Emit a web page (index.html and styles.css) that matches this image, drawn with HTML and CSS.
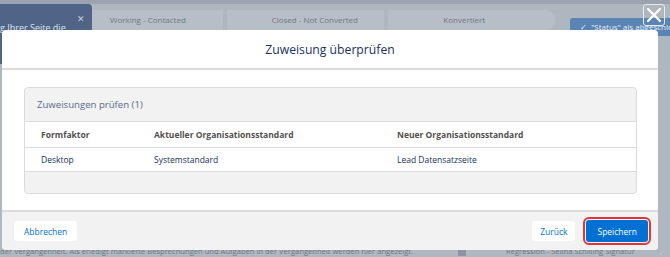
FILE: index.html
```html
<!DOCTYPE html>
<html lang="de">
<head>
    <meta charset="UTF-8">
    <title>Zuweisung überprüfen</title>
    <link rel="stylesheet" href="styles.css">
</head>
<body>
    <!-- page behind the dialog -->
    <div class="page">
        <div class="top-strip"></div>
        <div class="path-row">
            <div class="hint-panel">
                <span class="hint-close">&#x2715;</span>
                <span class="hint-text">g Ihrer Seite die</span>
            </div>
            <div class="path">
                <div class="step">Working - Contacted</div>
                <div class="step">Closed - Not Converted</div>
                <div class="step">Konvertiert</div>
            </div>
            <div class="status-btn">&#x2713;&nbsp;&nbsp;"Status" als abgeschlossen</div>
        </div>
        <div class="page-body">
            <p class="page-line">der Vergangenheit. Als erledigt markierte Besprechungen und Aufgaben in der Vergangenheit werden hier angezeigt.</p>
            <div class="page-side">
                <span class="side-box"></span>
                <span class="side-text">Regression - Selina Schilling Signatur</span>
            </div>
        </div>
    </div>

    <button class="modal-close" aria-label="Schließen">
        <svg width="16" height="16" viewBox="0 0 16 16"><path d="M2 2 L14 14 M14 2 L2 14" stroke="#fff" stroke-width="2.2" stroke-linecap="round"/></svg>
    </button>

    <div class="modal">
        <div class="modal-header">
            <h2>Zuweisung überprüfen</h2>
        </div>
        <div class="modal-body">
            <div class="card">
                <div class="card-header">Zuweisungen prüfen (1)</div>
                <table class="assign-table">
                    <thead>
                        <tr>
                            <th class="col-form">Formfaktor</th>
                            <th class="col-current">Aktueller Organisationsstandard</th>
                            <th>Neuer Organisationsstandard</th>
                        </tr>
                    </thead>
                    <tbody>
                        <tr>
                            <td>Desktop</td>
                            <td>Systemstandard</td>
                            <td>Lead Datensatzseite</td>
                        </tr>
                    </tbody>
                </table>
                <div class="card-footer"></div>
            </div>
        </div>
        <div class="modal-footer">
            <button class="btn btn-neutral">Abbrechen</button>
            <div class="footer-right">
                <button class="btn btn-neutral btn-back">Zurück</button>
                <button class="btn btn-brand">Speichern</button>
            </div>
        </div>
    </div>
</body>
</html>
```

FILE: styles.css
```css
* {
    margin: 0;
    padding: 0;
    box-sizing: border-box;
    font-family: 'Open Sans', 'Noto Sans', Arial, sans-serif;
}

body {
    width: 670px;
    height: 257px;
    overflow: hidden;
    background: #a7afb9;
    position: relative;
}

/* Background page (already dimmed by the backdrop) */
.page {
    display: flex;
    flex-direction: column;
    height: 100%;
}

.top-strip {
    height: 4px;
    background: #9aa3ae;
}

.path-row {
    display: flex;
    align-items: flex-start;
    height: 60px;
    background: #aeb6c0;
}

.hint-panel {
    width: 92px;
    height: 60px;
    background: #4f6487;
    border-top-right-radius: 4px;
    color: #dfe5ee;
    font-size: 9px;
    position: relative;
    padding-top: 17px;
}

.hint-close {
    position: absolute;
    right: 7px;
    top: 8px;
    font-size: 9px;
    color: #c9d2de;
}

.hint-text {
    display: block;
    white-space: nowrap;
}

.path {
    flex: 1;
    display: flex;
    margin-top: 6px;
    gap: 4px;
}

.step {
    flex: 1;
    height: 20px;
    background: #b7bec7;
    color: #6f7782;
    font-size: 8px;
    line-height: 20px;
    padding-left: 18px;
}

.step:nth-child(2) {
    padding-left: 45px;
}

.step:nth-child(3) {
    padding-left: 55px;
    border-radius: 0 10px 10px 0;
}

.status-btn {
    margin: 14px 0 0 14px;
    width: 100px;
    height: 18px;
    background: #5a84b4;
    color: #e6eef8;
    font-size: 8px;
    line-height: 18px;
    padding-left: 10px;
    white-space: nowrap;
    overflow: hidden;
    border-radius: 3px 0 0 3px;
}

.page-body {
    flex: 1;
    display: flex;
    align-items: flex-end;
    padding-bottom: 1px;
    background: #b0b7c0;
}

.page-line {
    width: 420px;
    font-size: 7.6px;
    color: #6e7884;
    white-space: nowrap;
}

.page-side {
    display: flex;
    align-items: flex-end;
    gap: 40px;
    margin-left: 38px;
    font-size: 7.6px;
    color: #6e7884;
}

.side-box {
    width: 8px;
    height: 10px;
    background: #8c96a2;
}

/* Dialog */
.modal-close {
    position: absolute;
    left: 643px;
    top: 4px;
    width: 22px;
    height: 22px;
    border: 1px solid #e8ecf1;
    border-radius: 3px;
    background: transparent;
    display: flex;
    align-items: center;
    justify-content: center;
}

.modal {
    position: absolute;
    left: 2px;
    top: 30px;
    width: 656px;
    height: 220px;
    background: #fff;
    border-radius: 4px;
    display: flex;
    flex-direction: column;
    overflow: hidden;
}

.modal-header {
    height: 40px;
    border-bottom: 2px solid #dddbda;
    display: flex;
    align-items: center;
    justify-content: center;
}

.modal-header h2 {
    font-size: 12.2px;
    font-weight: 400;
    color: #16325c;
}

.modal-body {
    flex: 1;
    padding: 17px 21px 0 22px;
}

.card {
    border: 1px solid #dddbda;
    border-radius: 4px;
    background: #f3f2f2;
    overflow: hidden;
}

.card-header {
    height: 33px;
    padding-left: 12px;
    font-size: 9.6px;
    line-height: 33px;
    color: #54698d;
}

.assign-table {
    width: 100%;
    border-collapse: collapse;
    background: #fff;
    font-size: 8.5px;
}

.assign-table th,
.assign-table td {
    text-align: left;
    padding: 0 0 0 16px;
    border-top: 1px solid #dddbda;
}

.assign-table th {
    height: 26px;
    font-weight: 700;
    color: #514f4d;
}

.assign-table td {
    height: 24px;
    color: #16325c;
    border-bottom: 1px solid #dddbda;
}

.assign-table .col-form {
    width: 113px;
}

.assign-table .col-current {
    width: 243px;
}

.card-footer {
    height: 21px;
}

.modal-footer {
    height: 40px;
    background: #f3f2f2;
    border-top: 2px solid #dddbda;
    display: flex;
    align-items: center;
    justify-content: space-between;
    padding: 0 10px 0 12px;
}

.footer-right {
    display: flex;
    gap: 11px;
    align-items: center;
}

.btn {
    height: 20px;
    border: none;
    border-radius: 3px;
    font-size: 8.5px;
    padding: 0 10px;
    cursor: pointer;
}

.btn-neutral {
    background: #fff;
    color: #0070d2;
}

.btn-back {
    padding: 0 8px;
}

.btn-brand {
    height: 22px;
    background: #0070d2;
    color: #fff;
    padding: 0 11px;
    outline: 2px solid #e0353d;
    outline-offset: 1px;
}
```
